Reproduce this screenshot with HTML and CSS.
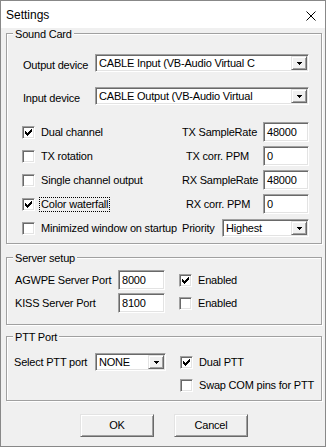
FILE: index.html
```html
<!DOCTYPE html>
<html>
<head>
<meta charset="utf-8">
<title>Settings</title>
<link rel="stylesheet" href="styles.css">
</head>
<body>
<svg class="defs" width="0" height="0">
  <symbol id="chk" viewBox="0 0 7 7"><path d="M6 0h1v1h-1z M5 1h2v1h-2z M0 2h1v1h-1z M4 2h3v1h-3z M0 3h2v1h-2z M3 3h3v1h-3z M0 4h5v1h-5z M1 5h3v1h-3z M2 6h1v1h-1z"/></symbol>
  <symbol id="tri" viewBox="0 0 5 3"><path d="M0 0h5v1h-1v1h-1v1h-1v-1h-1v-1h-1z"/></symbol>
</svg>
<div class="window">
  <div class="titlebar">
    <span class="title">Settings</span>
    <svg class="close" width="10" height="10" viewBox="0 0 10 10"><path d="M0.5 0.5L9.5 9.5M9.5 0.5L0.5 9.5" stroke="#000" stroke-width="1" fill="none"/></svg>
  </div>
  <div class="client">
    <div class="group sound">
      <span class="legend">Sound Card</span>
      <div class="dev-row">
        <span class="lbl">Output device</span>
        <div class="combo"><span class="ctext">CABLE Input (VB-Audio Virtual C</span><span class="dd"><svg width="5" height="3" shape-rendering="crispEdges"><use href="#tri"/></svg></span></div>
      </div>
      <div class="dev-row">
        <span class="lbl">Input device</span>
        <div class="combo"><span class="ctext">CABLE Output (VB-Audio Virtual</span><span class="dd"><svg width="5" height="3" shape-rendering="crispEdges"><use href="#tri"/></svg></span></div>
      </div>
      <div class="opts">
        <div class="chk-item"><span class="cb"><svg width="7" height="7" shape-rendering="crispEdges"><use href="#chk"/></svg></span><span>Dual channel</span></div>
        <div class="field"><span>TX SampleRate</span><span class="inp">48000</span></div>
        <div class="chk-item"><span class="cb"></span><span>TX rotation</span></div>
        <div class="field"><span class="indent">TX corr. PPM</span><span class="inp">0</span></div>
        <div class="chk-item"><span class="cb"></span><span>Single channel output</span></div>
        <div class="field"><span>RX SampleRate</span><span class="inp">48000</span></div>
        <div class="chk-item"><span class="cb"><svg width="7" height="7" shape-rendering="crispEdges"><use href="#chk"/></svg></span><span class="focus">Color waterfall</span></div>
        <div class="field"><span class="indent">RX corr. PPM</span><span class="inp">0</span></div>
        <div class="chk-item"><span class="cb"></span><span class="nowrap">Minimized window on startup</span></div>
        <div class="field"><span>Priority</span><div class="combo priority"><span class="ctext">Highest</span><span class="dd"><svg width="5" height="3" shape-rendering="crispEdges"><use href="#tri"/></svg></span></div></div>
      </div>
    </div>
    <div class="group server">
      <span class="legend">Server setup</span>
      <span>AGWPE Server Port</span>
      <span class="inp">8000</span>
      <div class="chk-item"><span class="cb"><svg width="7" height="7" shape-rendering="crispEdges"><use href="#chk"/></svg></span><span>Enabled</span></div>
      <span>KISS Server Port</span>
      <span class="inp">8100</span>
      <div class="chk-item"><span class="cb"></span><span>Enabled</span></div>
    </div>
    <div class="group ptt">
      <span class="legend">PTT Port</span>
      <span>Select PTT port</span>
      <div class="combo"><span class="ctext">NONE</span><span class="dd"><svg width="5" height="3" shape-rendering="crispEdges"><use href="#tri"/></svg></span></div>
      <div class="chk-item"><span class="cb"><svg width="7" height="7" shape-rendering="crispEdges"><use href="#chk"/></svg></span><span>Dual PTT</span></div>
      <div class="chk-item col3"><span class="cb"></span><span>Swap COM pins for PTT</span></div>
    </div>
    <div class="buttons">
      <span class="btn">OK</span>
      <span class="btn">Cancel</span>
    </div>
  </div>
</div>
</body>
</html>
```

FILE: styles.css
```css
* { box-sizing: border-box; }
html, body { margin: 0; padding: 0; }
body {
  width: 328px;
  height: 447px;
  overflow: hidden;
  background: #ffffff;
  color: #000;
  font-family: "Liberation Sans", Arial, sans-serif;
  font-size: 11px;
  letter-spacing: -0.2px;
  line-height: 13px;
}
.defs { position: absolute; width: 0; height: 0; overflow: hidden; }

.window {
  width: 326px;
  height: 447px;
  border: 1px solid #888888;
  background: #f0f0f0;
  display: flex;
  flex-direction: column;
}
.titlebar {
  flex: none;
  height: 27px;
  background: #ffffff;
  display: flex;
  align-items: center;
  justify-content: space-between;
  padding: 0 9px 0 5px;
}
.title {
  font-family: "Segoe UI", "Liberation Sans", Arial, sans-serif;
  font-size: 12px;
  letter-spacing: 0;
  margin-top: 1px;
}
.close { display: block; margin-top: 2px; }

.client { padding: 5px 3px 0 5px; }

.group {
  position: relative;
  border: 1px solid #a0a0a0;
  box-shadow: 1px 1px 0 #ffffff, inset 1px 1px 0 #ffffff;
}
.legend {
  position: absolute;
  top: -6px;
  left: 6px;
  padding: 0 2px;
  background: #f0f0f0;
  line-height: 13px;
}

/* sunken / raised 3D edges */
.combo, .inp, .cb {
  background: #ffffff;
  border: 1px solid;
  border-color: #a0a0a0 #ffffff #ffffff #a0a0a0;
  box-shadow: inset 1px 1px 0 #696969, inset -1px -1px 0 #e3e3e3;
}
.combo {
  display: flex;
  height: 18px;
}
.ctext {
  flex: 1;
  padding-left: 3px;
  line-height: 16px;
  white-space: nowrap;
  overflow: hidden;
}
.dd {
  flex: none;
  width: 16px;
  margin: 1px;
  background: #f0f0f0;
  border: 1px solid;
  border-color: #e3e3e3 #696969 #696969 #e3e3e3;
  box-shadow: inset 1px 1px 0 #ffffff, inset -1px -1px 0 #a0a0a0;
  display: flex;
  align-items: center;
  justify-content: center;
}
.dd svg { display: block; margin-top: 1px; }

.inp {
  display: block;
  height: 20px;
  padding-left: 3px;
  line-height: 18px;
}
.cb {
  flex: none;
  display: block;
  width: 13px;
  height: 13px;
  padding: 2px;
}
.cb svg { display: block; }

.chk-item {
  display: flex;
  align-items: center;
  gap: 6px;
  white-space: nowrap;
}
.focus {
  outline: 1px dotted #000;
  margin-left: -1px;
  padding: 0 1px;
}

/* Sound card */
.sound {
  height: 211px;
  padding: 20px 12px 3px 16px;
}
.dev-row {
  display: grid;
  grid-template-columns: 72px 214px;
  height: 18px;
}
.dev-row + .dev-row { margin-top: 15px; }
.dev-row .lbl { padding-top: 5px; white-space: nowrap; }

.opts {
  display: grid;
  grid-template-columns: 160px 127px;
  grid-auto-rows: 24px;
  margin: 15px 0 0 -1px;
}
.field {
  display: flex;
  align-items: center;
  white-space: nowrap;
}
.field .inp { width: 46px; margin-left: auto; }
.field .priority { width: 87px; margin-left: auto; }
.indent { padding-left: 4px; }

/* Server setup */
.server {
  margin-top: 13px;
  height: 68px;
  padding: 12px 8px 11px 8px;
  display: grid;
  grid-template-columns: 103px 47px auto;
  grid-auto-rows: 20px;
  row-gap: 3px;
  align-items: center;
}
.server .chk-item { margin-left: 14px; }

/* PTT */
.ptt {
  margin-top: 11px;
  height: 65px;
  padding: 16px 8px 6px 7px;
  display: grid;
  grid-template-columns: 81px 71px auto;
  grid-auto-rows: 18px;
  row-gap: 5px;
  align-items: center;
}
.ptt .chk-item { margin-left: 14px; }
.col3 { grid-column: 3; }

/* Buttons */
.buttons {
  display: flex;
  justify-content: center;
  gap: 20px;
  margin-top: 13px;
}
.btn {
  width: 74px;
  height: 23px;
  display: flex;
  align-items: center;
  justify-content: center;
  background: #f0f0f0;
  border: 1px solid;
  border-color: #e3e3e3 #696969 #696969 #e3e3e3;
  box-shadow: inset 1px 1px 0 #ffffff, inset -1px -1px 0 #a0a0a0;
}
```
